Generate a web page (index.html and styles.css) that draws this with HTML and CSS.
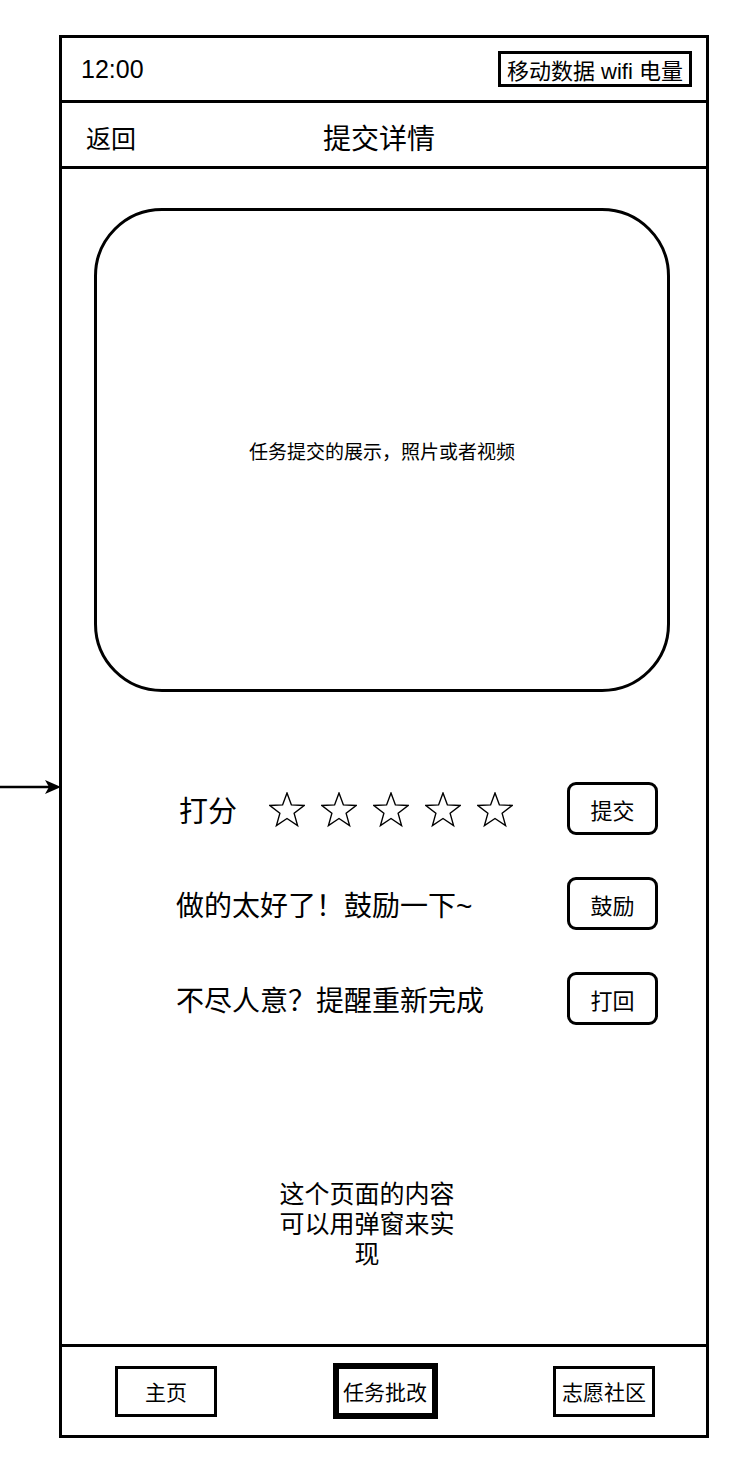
FILE: index.html
```html
<!DOCTYPE html>
<html lang="zh-CN">
<head>
    <meta charset="UTF-8">
    <meta name="viewport" content="width=device-width, initial-scale=1.0">
    <title>提交详情</title>
    <link rel="stylesheet" href="styles.css">
</head>
<body>
    <div class="canvas">
        <!-- incoming link from the previous screen -->
        <svg class="link-arrow" width="62" height="20" viewBox="0 0 62 20">
            <line x1="0" y1="10" x2="50" y2="10" stroke="#000" stroke-width="2.5"/>
            <polygon points="61,10 45,3 49,10 45,17" fill="#000"/>
        </svg>

        <div class="phone">
            <div class="status-bar">
                <span class="time">12:00</span>
                <span class="signal">移动数据 wifi 电量</span>
            </div>

            <div class="top-bar">
                <span class="back">返回</span>
                <span class="title">提交详情</span>
                <span></span>
            </div>

            <div class="content">
                <div class="media">任务提交的展示，照片或者视频</div>

                <div class="actions">
                    <div class="action-row">
                        <div class="rate">
                            <span class="action-text rate-label">打分</span>
                            <span class="stars">
                                <svg class="star" viewBox="0 0 36 36"><polygon points="18,1 22.41,12.93 35.12,13.44 25.13,21.32 28.58,33.56 18,26.5 7.42,33.56 10.87,21.32 0.88,13.44 13.59,12.93"/></svg>
                                <svg class="star" viewBox="0 0 36 36"><polygon points="18,1 22.41,12.93 35.12,13.44 25.13,21.32 28.58,33.56 18,26.5 7.42,33.56 10.87,21.32 0.88,13.44 13.59,12.93"/></svg>
                                <svg class="star" viewBox="0 0 36 36"><polygon points="18,1 22.41,12.93 35.12,13.44 25.13,21.32 28.58,33.56 18,26.5 7.42,33.56 10.87,21.32 0.88,13.44 13.59,12.93"/></svg>
                                <svg class="star" viewBox="0 0 36 36"><polygon points="18,1 22.41,12.93 35.12,13.44 25.13,21.32 28.58,33.56 18,26.5 7.42,33.56 10.87,21.32 0.88,13.44 13.59,12.93"/></svg>
                                <svg class="star" viewBox="0 0 36 36"><polygon points="18,1 22.41,12.93 35.12,13.44 25.13,21.32 28.58,33.56 18,26.5 7.42,33.56 10.87,21.32 0.88,13.44 13.59,12.93"/></svg>
                            </span>
                        </div>
                        <button class="action-btn">提交</button>
                    </div>
                    <div class="action-row">
                        <span class="action-text">做的太好了！鼓励一下~</span>
                        <button class="action-btn">鼓励</button>
                    </div>
                    <div class="action-row">
                        <span class="action-text">不尽人意？提醒重新完成</span>
                        <button class="action-btn">打回</button>
                    </div>
                </div>

                <div class="note">这个页面的内容可以用弹窗来实现</div>
            </div>

            <div class="tab-bar">
                <div class="tab">主页</div>
                <div class="tab active">任务批改</div>
                <div class="tab">志愿社区</div>
            </div>
        </div>
    </div>
</body>
</html>
```

FILE: styles.css
```css
body {
    margin: 0;
    background: #fff;
    color: #000;
    font-family: "Liberation Sans", "Noto Sans CJK SC", sans-serif;
}
.canvas {
    position: relative;
    width: 745px;
    height: 1483px;
    padding-top: 35px;
    box-sizing: border-box;
}
.link-arrow {
    position: absolute;
    left: 0;
    top: 777px;
}
.phone {
    margin-left: 59px;
    width: 650px;
    height: 1403px;
    border: 3px solid #000;
    box-sizing: border-box;
    display: flex;
    flex-direction: column;
}

/* status bar */
.status-bar {
    height: 62px;
    border-bottom: 3px solid #000;
    display: flex;
    align-items: center;
    justify-content: space-between;
    padding: 0 14px 0 19px;
}
.time {
    font-size: 25px;
}
.signal {
    height: 36px;
    border: 3px solid #000;
    box-sizing: border-box;
    padding: 0 6px;
    font-size: 22px;
    display: flex;
    align-items: center;
}

/* header */
.top-bar {
    height: 66px;
    border-bottom: 3px solid #000;
    display: grid;
    grid-template-columns: 1fr auto 1fr;
    align-items: center;
    padding: 4px 34px 0 24px;
    box-sizing: border-box;
}
.back {
    font-size: 25px;
}
.title {
    font-size: 28px;
}

/* main */
.content {
    flex: 1;
    border-bottom: 3px solid #000;
    display: flex;
    flex-direction: column;
}
.media {
    margin: 39px 0 0 32px;
    width: 576px;
    height: 484px;
    border: 3px solid #000;
    border-radius: 68px;
    box-sizing: border-box;
    display: flex;
    align-items: center;
    justify-content: center;
    font-size: 19px;
}
.actions {
    margin-top: 90px;
    padding: 0 48px 0 114px;
    display: flex;
    flex-direction: column;
    gap: 42px;
}
.action-row {
    height: 53px;
    display: flex;
    align-items: center;
    justify-content: space-between;
}
.action-text {
    font-size: 28px;
}
.rate {
    display: flex;
    align-items: center;
}
.rate-label {
    margin-left: 3px;
    font-size: 29px;
}
.stars {
    display: flex;
    gap: 16px;
    margin-left: 32px;
    margin-top: 2px;
}
.star {
    width: 36px;
    height: 36px;
    fill: #fff;
    stroke: #000;
    stroke-width: 1.4;
    stroke-linejoin: miter;
}
.action-btn {
    width: 91px;
    height: 53px;
    border: 3px solid #000;
    border-radius: 9px;
    background: #fff;
    color: #000;
    font-family: inherit;
    font-size: 22px;
    padding: 0;
    box-sizing: border-box;
}
.note {
    align-self: center;
    margin: 154px 34px 0 0;
    width: 190px;
    font-size: 25px;
    line-height: 30px;
    text-align: center;
}

/* bottom tabs */
.tab-bar {
    height: 88px;
    display: flex;
    align-items: center;
    justify-content: space-between;
    padding: 0 51px 0 53px;
}
.tab {
    width: 102px;
    height: 51px;
    border: 3px solid #000;
    box-sizing: border-box;
    display: flex;
    align-items: center;
    justify-content: center;
    font-size: 21px;
}
.tab.active {
    width: 105px;
    height: 56px;
    border-width: 6px;
}
```
